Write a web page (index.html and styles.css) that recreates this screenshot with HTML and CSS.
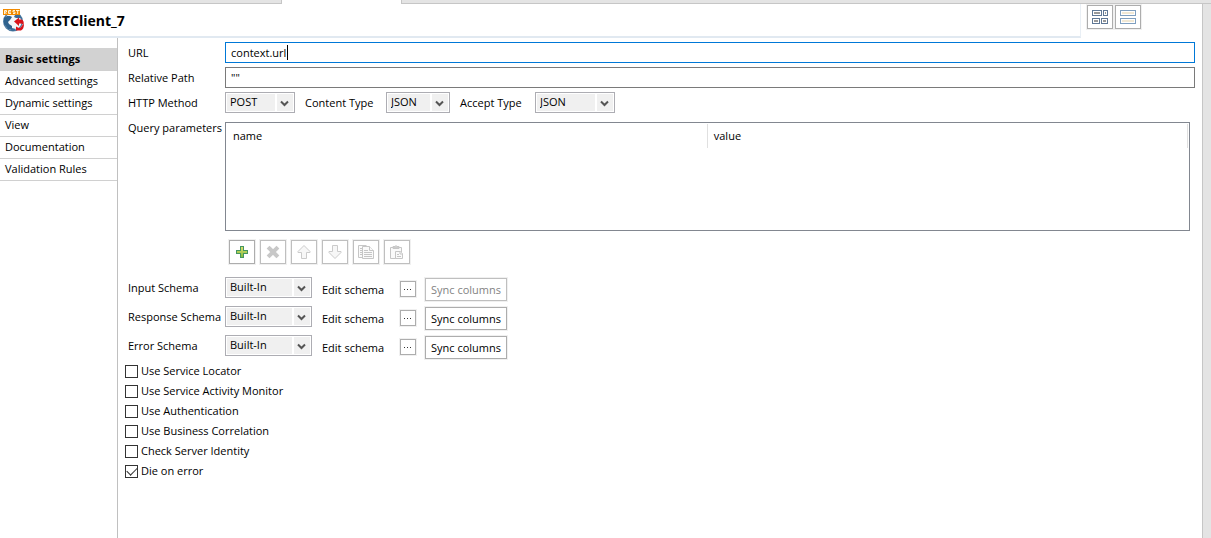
FILE: index.html
```html
<!DOCTYPE html>
<html lang="en">
<head>
<meta charset="utf-8">
<title>tRESTClient_7</title>
<link rel="stylesheet" href="styles.css">
</head>
<body>
<div class="workbench">
  <div class="tabstrip"><span class="tab-left"></span><span class="tab-active"></span><span class="tab-rest"></span></div>
  <div class="view">
    <header class="header">
      <div class="title-bar">
        <svg class="logo" width="24" height="24" viewBox="0 0 24 24" aria-hidden="true">
          <circle cx="11" cy="12.500" r="9.300" fill="#f4f7f9" stroke="#4d7ba3" stroke-width="1.400"/>
          <path d="M2 9l3-2h3l2 1-2 3-2 2 1 2 3 2v4l-4-1-4-5z" fill="#2f628e"/>
          <path d="M13 6h5l2 4-3-1-3 0-2-1z" fill="#3b6d98"/>
          <path d="M10 19l4 1-2 2-3 0z" fill="#3b6d98"/>
          <rect x="1" y="0" width="17" height="6" fill="#f18a00"/>
          <path d="M2.500 5V1.500h2v1.500h-2l2 2M9 1.500H6.500v3H9M6.500 3H9M13 1.500h-2V3h2v1.500h-2M14 1.500h3.500M15.700 1.500V5" fill="none" stroke="#fff4d8"/>
          <path d="M12 12.500l5-4v2h2.500q3 1 2 5.500l-2-1.500H17V17z" fill="#d9141b"/>
          <path d="M22 15q0 5-3 6.500h-5v-4l3 1.500q2 0 3-2.500z" fill="#d9141b"/>
        </svg>
        <h1 class="title">tRESTClient_7</h1>
      </div>
      <div class="layout-buttons">
        <button class="tool" type="button" aria-label="Compact layout">
          <svg width="18" height="16" viewBox="0 0 18 16" shape-rendering="crispEdges"><g fill="#fff" stroke="#5f7896"><path d="M1.500 1.500h9v5h-9zM12.500 1.500h4v5h-4zM1.500 9.500h7v5h-7zM10.500 9.500h6v5h-6z"/></g><path d="M3 3h6v2H3zM14 3h1v2h-1zM3 11h4v2H3zM12 11h3v2h-3z" fill="#999"/></svg>
        </button>
        <button class="tool" type="button" aria-label="Row layout">
          <svg width="18" height="16" viewBox="0 0 18 16" shape-rendering="crispEdges"><path d="M1.500 1.500h15v5h-15zM1.500 9.500h15v5h-15z" fill="#fff" stroke="#7f9fc0"/><path d="M3 3h12v2H3zM3 11h12v2H3z" fill="#f1e8d4"/></svg>
        </button>
      </div>
    </header>

    <div class="content">
      <nav class="sidebar">
        <a class="nav-item selected" href="#">Basic settings</a>
        <a class="nav-item" href="#">Advanced settings</a>
        <a class="nav-item" href="#">Dynamic settings</a>
        <a class="nav-item" href="#">View</a>
        <a class="nav-item" href="#">Documentation</a>
        <a class="nav-item" href="#">Validation Rules</a>
      </nav>

      <form class="form">
        <div class="row">
          <label class="name" for="url">URL</label>
          <div class="field"><input class="text focused" id="url" type="text" value="context.url"><span class="caret"></span></div>
        </div>
        <div class="row">
          <label class="name" for="path">Relative Path</label>
          <div class="field"><input class="text" id="path" type="text" value='""'></div>
        </div>
        <div class="row">
          <label class="name" for="method">HTTP Method</label>
          <span class="combo method"><select id="method"><option>POST</option></select><svg class="chevron" width="9" height="7" viewBox="0 0 9 7"><path d="M1 1.500l3.500 3.500L8 1.500"/></svg></span>
          <label class="inline" for="content-type">Content Type</label>
          <span class="combo content-type"><select id="content-type"><option>JSON</option></select><svg class="chevron" width="9" height="7" viewBox="0 0 9 7"><path d="M1 1.500l3.500 3.500L8 1.500"/></svg></span>
          <label class="inline" for="accept-type">Accept Type</label>
          <span class="combo accept-type"><select id="accept-type"><option>JSON</option></select><svg class="chevron" width="9" height="7" viewBox="0 0 9 7"><path d="M1 1.500l3.500 3.500L8 1.500"/></svg></span>
        </div>
        <div class="row params">
          <span class="name" id="params-label">Query parameters</span>
          <div class="grid-box">
            <table class="grid" aria-labelledby="params-label">
              <thead><tr><th>name</th><th>value</th></tr></thead>
            </table>
          </div>
        </div>
        <div class="toolbar">
          <button class="tool" type="button" aria-label="Add">
            <svg width="16" height="16" viewBox="0 0 16 16" shape-rendering="crispEdges"><defs><linearGradient id="plus" x2="0" y2="1"><stop offset="0" stop-color="#e3e070"/><stop offset="1" stop-color="#7dbb3c"/></linearGradient></defs><path d="M6.500 2.500h3v4h4v3h-4v4h-3v-4h-4v-3h4z" fill="url(#plus)" stroke="#459660"/></svg>
          </button>
          <button class="tool" type="button" aria-label="Remove" disabled>
            <svg width="16" height="16" viewBox="0 0 16 16"><path d="M4.500 4.500l7 7M11.500 4.500l-7 7" stroke="#c8c8c8" stroke-width="4" stroke-linecap="square"/></svg>
          </button>
          <button class="tool" type="button" aria-label="Move up" disabled>
            <svg width="16" height="16" viewBox="0 0 16 16"><path d="M8 1.500l6 6v1h-3.500v6h-5v-6H2v-1z" fill="#f7f7f7" stroke="#cbcbcb"/></svg>
          </button>
          <button class="tool" type="button" aria-label="Move down" disabled>
            <svg width="16" height="16" viewBox="0 0 16 16"><path d="M8 14.500l6-6v-1h-3.500v-6h-5v6H2v1z" fill="#f7f7f7" stroke="#cbcbcb"/></svg>
          </button>
          <button class="tool" type="button" aria-label="Copy" disabled>
            <svg width="16" height="16" viewBox="0 0 16 16" fill="#fafafa" stroke="#c6c6c6"><path d="M8.500 1.500h-8v12h4M2 4.500h2M2 6.500h2M2 8.500h2M2 10.500h2"/><path d="M4.500 2.500h7l4 4v8h-11z"/><path d="M11.500 2.500v4h4M6 6.500h4M6 8.500h8M6 10.500h8M6 12.500h8"/></svg>
          </button>
          <button class="tool" type="button" aria-label="Paste" disabled>
            <svg width="16" height="16" viewBox="0 0 16 16" fill="#fafafa" stroke="#c6c6c6"><path d="M1.500 3.500h11v11h-11z"/><path d="M4 4.500v-2h2l1-1 1 1h2v2z" fill="#ccc"/><path d="M6.500 7.500h5l2 2v5h-7z"/><path d="M11 7.500v2.500h3M8 10.500h2M8 12.500h4"/></svg>
          </button>
        </div>

        <div class="row schema">
          <label class="name" for="input-schema">Input Schema</label>
          <span class="combo builtin"><select id="input-schema"><option>Built-In</option></select><svg class="chevron" width="9" height="7" viewBox="0 0 9 7"><path d="M1 1.500l3.500 3.500L8 1.500"/></svg></span>
          <span class="edit">Edit schema</span>
          <button class="more" type="button" aria-label="Edit input schema"><svg width="8" height="1" viewBox="0 0 8 1"><path d="M0 0h1v1H0zM3 0h1v1H3zM6 0h1v1H6z"/></svg></button>
          <button class="sync" type="button" disabled>Sync columns</button>
        </div>
        <div class="row schema">
          <label class="name" for="response-schema">Response Schema</label>
          <span class="combo builtin"><select id="response-schema"><option>Built-In</option></select><svg class="chevron" width="9" height="7" viewBox="0 0 9 7"><path d="M1 1.500l3.500 3.500L8 1.500"/></svg></span>
          <span class="edit">Edit schema</span>
          <button class="more" type="button" aria-label="Edit response schema"><svg width="8" height="1" viewBox="0 0 8 1"><path d="M0 0h1v1H0zM3 0h1v1H3zM6 0h1v1H6z"/></svg></button>
          <button class="sync" type="button">Sync columns</button>
        </div>
        <div class="row schema">
          <label class="name" for="error-schema">Error Schema</label>
          <span class="combo builtin"><select id="error-schema"><option>Built-In</option></select><svg class="chevron" width="9" height="7" viewBox="0 0 9 7"><path d="M1 1.500l3.500 3.500L8 1.500"/></svg></span>
          <span class="edit">Edit schema</span>
          <button class="more" type="button" aria-label="Edit error schema"><svg width="8" height="1" viewBox="0 0 8 1"><path d="M0 0h1v1H0zM3 0h1v1H3zM6 0h1v1H6z"/></svg></button>
          <button class="sync" type="button">Sync columns</button>
        </div>

        <div class="checks">
          <label class="check"><input type="checkbox">Use Service Locator</label>
          <label class="check"><input type="checkbox">Use Service Activity Monitor</label>
          <label class="check"><input type="checkbox">Use Authentication</label>
          <label class="check"><input type="checkbox">Use Business Correlation</label>
          <label class="check"><input type="checkbox">Check Server Identity</label>
          <label class="check"><input type="checkbox" checked>Die on error</label>
        </div>
      </form>
    </div>
  </div>
</div>
</body>
</html>
```
FILE: styles.css
```css
* { box-sizing: border-box; }

body {
  margin: 0;
  background: #e4e4e4;
  color: #000;
  font: 11px/16px "Open Sans", "Noto Sans", sans-serif;
}

button, input, select { font: inherit; color: inherit; margin: 0; }
svg { display: block; }

.workbench { display: flex; flex-direction: column; min-height: 100vh; }

.tabstrip { display: flex; height: 4px; }
.tab-left { width: 282px; border-right: 1px solid #c6c6c6; border-bottom: 1px solid #c6c6c6; }
.tab-active { width: 119px; background: #fff; }
.tab-rest { flex: 1; border-left: 1px solid #c6c6c6; border-bottom: 1px solid #c6c6c6; }

.view {
  flex: 1;
  display: flex;
  flex-direction: column;
  margin-right: 8px;
  border-right: 1px solid #c6c6c6;
  background: #fff;
}

.header { display: flex; gap: 6px; padding-right: 61px; }
.title-bar {
  flex: 1;
  display: flex;
  align-items: center;
  gap: 5px;
  height: 34px;
  padding: 2px 0 0 2px;
  border-right: 1px solid #e9eff5;
  border-bottom: 2px solid #e1e9f1;
}
.title { margin: 0; font-size: 14px; line-height: 20px; font-weight: 700; }
.layout-buttons { display: flex; gap: 2px; padding-top: 1px; align-items: flex-start; }

.tool {
  display: flex;
  align-items: center;
  justify-content: center;
  width: 26px;
  height: 24px;
  padding: 0;
  border: 1px solid #adadad;
  background: #fff;
  box-shadow: 0 0 0 1px #f0f0f0;
}
.tool:disabled { border-color: #bfbfbf; }

.content { flex: 1; display: flex; }

.sidebar { width: 118px; padding-top: 10px; border-right: 1px solid #c0c0c0; }
.nav-item {
  display: block;
  height: 22px;
  padding: 2px 5px;
  border-bottom: 1px solid #d0d0d0;
  color: #000;
  text-decoration: none;
  white-space: nowrap;
}
.nav-item.selected { height: 23px; padding-top: 3px; background: #d2d2d2; font-weight: 700; }

.form { flex: 1; display: flex; flex-direction: column; gap: 4px; padding: 4px 7px 0 10px; }
.row { display: flex; height: 21px; align-items: center; }
.name { width: 97px; flex: none; white-space: nowrap; }

.field { position: relative; flex: 1; }
.text {
  display: block;
  width: 100%;
  height: 21px;
  padding: 0 5px;
  border: 1px solid #7a7a7a;
  background: #fff;
  outline: none;
}
.text.focused { border-color: #0078d7; }
.caret { position: absolute; left: 62px; top: 3px; width: 1px; height: 15px; background: #000; }

.combo {
  position: relative;
  display: flex;
  height: 21px;
  padding: 1px;
  border: 1px solid #adadb3;
  background: #fff;
}
.combo select {
  appearance: none;
  width: 100%;
  padding: 0 3px 1px;
  border: 0;
  border-radius: 0;
  background: linear-gradient(to left, #f0f0f0 16px, #fff 16px, #fff 18px, #f0f0f0 18px);
}
.chevron { position: absolute; right: 5px; top: 7px; pointer-events: none; fill: none; stroke: #555; stroke-width: 2; }
.method { width: 70px; }
.content-type { width: 64px; }
.accept-type { width: 80px; }
.builtin { width: 87px; }
.inline { padding: 0 10px; white-space: nowrap; }
.method + .inline { width: 91px; }
.content-type + .inline { width: 85px; }

.params { height: auto; align-items: flex-start; padding: 5px 5px 0 0; }
.params .name { line-height: 12px; }
.grid-box { flex: 1; height: 109px; padding: 1px; border: 1px solid #828790; }
.grid { width: 100%; table-layout: fixed; border-collapse: collapse; }
.grid th {
  height: 24px;
  padding: 0 6px;
  border-right: 1px solid #e0e0e0;
  font-weight: 400;
  text-align: left;
}

.toolbar { display: flex; gap: 5px; padding: 5px 0 0 101px; }

.schema { height: 25px; align-items: flex-start; }
.toolbar + .schema { margin-top: 9px; }
.schema .name { line-height: 21px; }
.edit { width: 88px; padding-left: 10px; line-height: 25px; }
.more {
  display: flex;
  align-items: center;
  justify-content: center;
  width: 16px;
  height: 16px;
  margin: 4px 9px 0 0;
  padding: 0;
  border: 1px solid #adadad;
  background: #fff;
  box-shadow: 0 0 0 1px #f0f0f0;
  fill: #333;
}
.sync {
  width: 82px;
  height: 23px;
  margin-top: 1px;
  padding: 0;
  border: 1px solid #adadad;
  background: #fff;
  box-shadow: 0 0 0 1px #f0f0f0;
  white-space: nowrap;
}
.sync:disabled { border-color: #bfbfbf; color: #838383; }

.checks { display: flex; flex-direction: column; align-items: flex-start; margin: -3px 0 0 -3px; }
.check { display: flex; align-items: center; gap: 3px; height: 20px; }
.check input {
  appearance: none;
  display: flex;
  align-items: flex-start;
  justify-content: center;
  width: 13px;
  height: 13px;
  border: 1px solid #333;
  background: #fff;
}
.check input:checked::after {
  content: "";
  width: 9px;
  height: 5px;
  margin-top: 2px;
  border: solid #333;
  border-width: 0 0 1px 1px;
  transform: translateY(-1px) rotate(-45deg);
}
```
